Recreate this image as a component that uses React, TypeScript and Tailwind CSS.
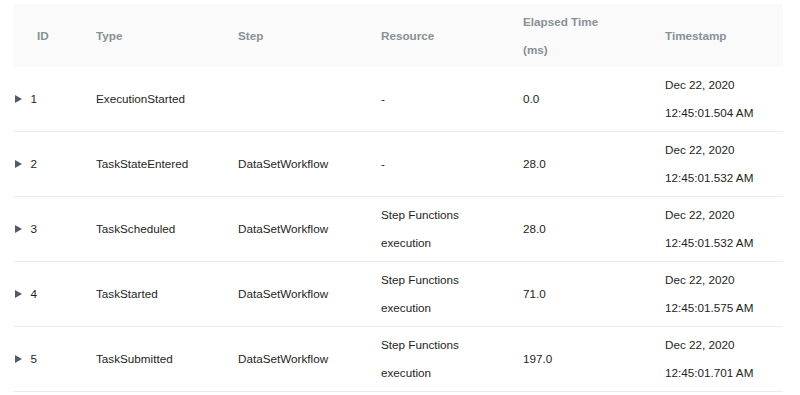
const events = [
  { id: 1, type: "ExecutionStarted", step: "", resource: ["-"], elapsed: "0.0", time: "12:45:01.504 AM" },
  { id: 2, type: "TaskStateEntered", step: "DataSetWorkflow", resource: ["-"], elapsed: "28.0", time: "12:45:01.532 AM" },
  { id: 3, type: "TaskScheduled", step: "DataSetWorkflow", resource: ["Step Functions", "execution"], elapsed: "28.0", time: "12:45:01.532 AM" },
  { id: 4, type: "TaskStarted", step: "DataSetWorkflow", resource: ["Step Functions", "execution"], elapsed: "71.0", time: "12:45:01.575 AM" },
  { id: 5, type: "TaskSubmitted", step: "DataSetWorkflow", resource: ["Step Functions", "execution"], elapsed: "197.0", time: "12:45:01.701 AM" },
];

const cols = "grid grid-cols-[70px_142px_143px_142px_142px_131px]";

function Caret() {
  return (
    <svg width="7" height="8" viewBox="0 0 7 8" className="shrink-0">
      <path d="M0 0 L7 4 L0 8 Z" fill="#545b64" />
    </svg>
  );
}

export default function App() {
  return (
    <div className="min-h-[395px] w-[800px] bg-white pl-[13px] pt-[4px] font-['Liberation_Sans',Arial,sans-serif] text-[11.7px] leading-[28px] text-[#1d1f22]">
      <div className="w-[770px]">
        <div className={`${cols} h-[63px] items-center bg-[#fafafa] font-bold text-[#879196]`}>
          <div className="pl-[24px]">ID</div>
          <div className="pl-[13px]">Type</div>
          <div className="pl-[13px]">Step</div>
          <div className="pl-[13px]">Resource</div>
          <div className="pl-[13px]">
            <div>Elapsed Time</div>
            <div>(ms)</div>
          </div>
          <div className="pl-[13px]">Timestamp</div>
        </div>
        {events.map((e) => (
          <div key={e.id} className={`${cols} h-[65px] items-center border-b border-[#eaeded]`}>
            <div className="flex items-center gap-[9px] pl-[1.5px]">
              <Caret />
              <span>{e.id}</span>
            </div>
            <div className="pl-[13px]">{e.type}</div>
            <div className="pl-[13px]">{e.step}</div>
            <div className="pl-[13px]">
              {e.resource.map((r) => (
                <div key={r}>{r}</div>
              ))}
            </div>
            <div className="pl-[13px]">{e.elapsed}</div>
            <div className="pl-[13px]">
              <div>Dec 22, 2020</div>
              <div>{e.time}</div>
            </div>
          </div>
        ))}
      </div>
    </div>
  );
}
